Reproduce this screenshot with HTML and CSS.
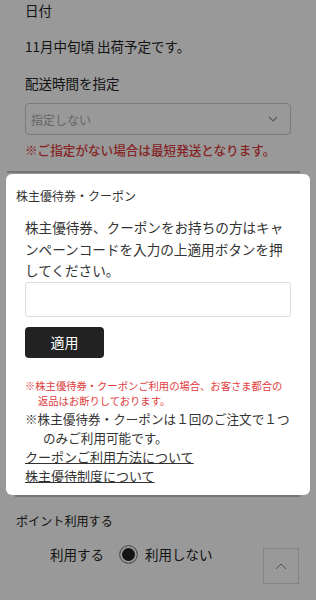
FILE: index.html
```html
<!DOCTYPE html>
<html lang="ja">
<head>
    <meta charset="UTF-8">
    <meta name="viewport" content="width=device-width, initial-scale=1.0">
    <title>ご注文手続き</title>
    <link rel="stylesheet" href="styles.css">
</head>
<body>
    <div class="page">
        <!-- delivery -->
        <div class="delivery">
            <div class="label">日付</div>
            <div class="label date">11月中旬頃 出荷予定です。</div>
            <div class="label time-label">配送時間を指定</div>
            <div class="select">
                <span>指定しない</span>
                <svg width="10" height="6" viewBox="0 0 10 6"><polyline points="1,1 5,5 9,1" fill="none" stroke="#999" stroke-width="1.2"/></svg>
            </div>
            <div class="delivery-note">※ご指定がない場合は最短発送となります。</div>
        </div>
        <div class="rule rule-top"></div>
        <div class="coupon-area"></div>
        <div class="rule rule-bottom"></div>
        <!-- points -->
        <div class="points">
            <div class="points-title">ポイント利用する</div>
            <div class="radios">
                <span class="radio-text">利用する</span>
                <span class="dot"></span>
                <span class="radio-text">利用しない</span>
            </div>
        </div>
        <div class="payment">お支払い方法</div>
    </div>

    <div class="to-top">
        <svg width="12" height="7" viewBox="0 0 12 7"><polyline points="1,6 6,1 11,6" fill="none" stroke="#888" stroke-width="1"/></svg>
    </div>

    <!-- coupon modal -->
    <div class="overlay">
        <div class="modal">
            <div class="modal-title">株主優待券・クーポン</div>
            <div class="modal-text">株主優待券、クーポンをお持ちの方はキャンペーンコードを入力の上適用ボタンを押してください。</div>
            <input type="text" class="code-input">
            <button class="apply">適用</button>
            <div class="warn">※株主優待券・クーポンご利用の場合、お客さま都合の返品はお断りしております。</div>
            <div class="limit">※株主優待券・クーポンは１回のご注文で１つのみご利用可能です。</div>
            <div class="links">
                <a href="#">クーポンご利用方法について</a>
                <a href="#">株主優待制度について</a>
            </div>
        </div>
    </div>
</body>
</html>
```

FILE: styles.css
```css
body{
    margin: 0;
    font-family: "Noto Sans CJK JP", "Noto Sans", sans-serif;
    color: #222;
    background: #fff;
}
.delivery{
    padding: 0 25px;
}
.label{
    font-size: 13.5px;
    line-height: 20px;
}
.date{
    margin-top: 16px;
}
.time-label{
    margin-top: 17px;
}
.select{
    margin-top: 10px;
    height: 32px;
    box-sizing: border-box;
    border: 1px solid #ccc;
    border-radius: 4px;
    display: flex;
    align-items: center;
    justify-content: space-between;
    padding: 0 12px 0 5px;
    font-size: 12px;
    color: #aaa;
}
.delivery-note{
    margin-top: 5px;
    font-size: 12.6px;
    line-height: 20px;
    color: #e03c3c;
    font-weight: 500;
}
.rule{
    height: 2px;
    background: #c4c4c4;
}
.rule-top{
    margin: 11px 16px 0 7px;
}
.rule-bottom{
    margin: 0 16px 0 15px;
}
.coupon-area{
    height: 322px;
}
.points{
    padding-left: 16px;
}
.points-title{
    margin-top: 14px;
    font-size: 12.1px;
    line-height: 20px;
}
.radios{
    margin-top: 12px;
    padding-left: 34px;
    display: flex;
    align-items: center;
    font-size: 13.5px;
    line-height: 20px;
}
.dot{
    width: 19px;
    height: 19px;
    box-sizing: border-box;
    border-radius: 50%;
    border: 1px solid #999;
    box-shadow: inset 0 0 0 2px #fff;
    background: #222;
    margin: 2px 7px 0 15px;
}
.payment{
    margin-top: 33px;
    padding-left: 25px;
    font-size: 14px;
    font-weight: bold;
    line-height: 20px;
}
.to-top{
    position: fixed;
    right: 17px;
    bottom: 16px;
    width: 36px;
    height: 36px;
    box-sizing: border-box;
    border: 1px solid #ddd;
    background: #fff;
    display: flex;
    align-items: center;
    justify-content: center;
}
/* modal */
.overlay{
    position: fixed;
    top: 0;
    left: 0;
    right: 0;
    bottom: 0;
    background: rgba(0, 0, 0, 0.4);
}
.modal{
    position: absolute;
    top: 174px;
    left: 6px;
    right: 6px;
    background: #fff;
    border-radius: 6px;
    padding: 12px 19px 10px 19px;
    color: #333;
}
.modal-title{
    margin-left: -9px;
    font-size: 12px;
    line-height: 20px;
}
.modal-text{
    margin-top: 11px;
    font-size: 13.6px;
    line-height: 21.5px;
}
.code-input{
    display: block;
    width: 100%;
    height: 35px;
    box-sizing: border-box;
    border: 1px solid #ddd;
    border-radius: 3px;
    margin: 0;
}
.apply{
    display: block;
    margin-top: 10px;
    width: 79px;
    height: 31px;
    border: none;
    background: #222;
    color: #fff;
    border-radius: 4px;
    font-family: inherit;
    font-size: 14px;
    padding: 0;
}
.warn{
    margin-top: 20px;
    font-size: 10.3px;
    line-height: 15.5px;
    color: #e03c3c;
    padding-left: 13px;
    text-indent: -13px;
}
.limit{
    font-size: 12.6px;
    line-height: 19px;
    padding-left: 18px;
    text-indent: -18px;
}
.links>a{
    display: block;
    font-size: 13px;
    line-height: 19px;
    color: #333;
    text-decoration: underline;
}
```
